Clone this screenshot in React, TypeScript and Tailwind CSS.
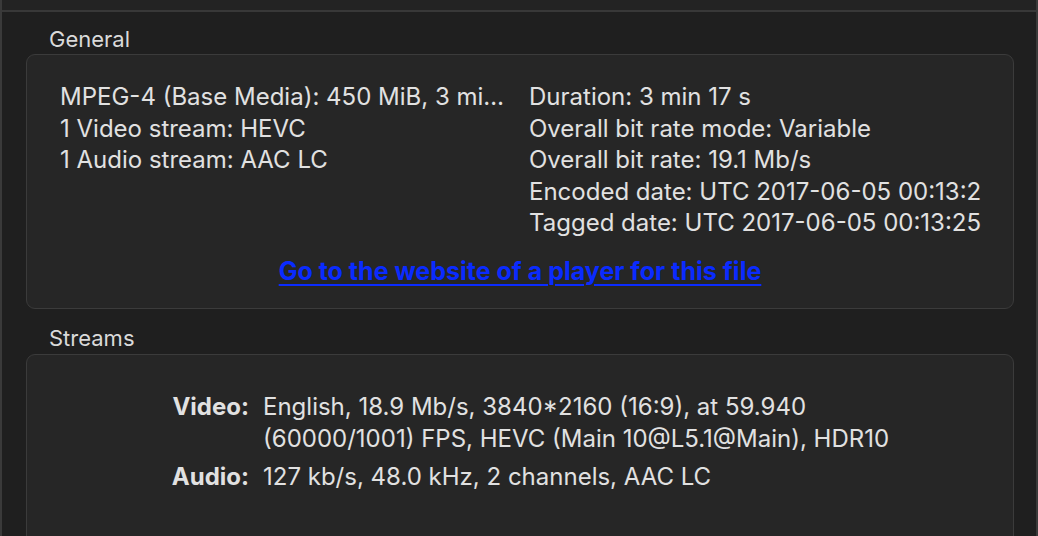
import React from "react";

const font = { fontFamily: "Inter, 'Noto Sans', sans-serif" };

function Section({ title, titleH, children, className = "" }: { title: string; titleH: string; children: React.ReactNode; className?: string }) {
  return (
    <div>
      <div className={`pl-[23px] flex items-end text-[22px] leading-[28px] text-[#dadada] ${titleH}`}>{title}</div>
      <div className={`rounded-[9px] border border-[#3b3b3b] bg-[#262626] ${className}`}>{children}</div>
    </div>
  );
}

export default function App() {
  const left = ["MPEG-4 (Base Media): 450 MiB, 3 min 17 s", "1 Video stream: HEVC", "1 Audio stream: AAC LC"];
  const right = [
    "Duration: 3 min 17 s",
    "Overall bit rate mode: Variable",
    "Overall bit rate: 19.1 Mb/s",
    "Encoded date: UTC 2017-06-05 00:13:25",
    "Tagged date: UTC 2017-06-05 00:13:25",
  ];

  return (
    <div style={font} className="h-[536px] overflow-hidden bg-[#1f1f1f] border-l-2 border-r-2 border-[#3a3a3a] text-[#e1e1e1]">
      <div className="h-[12px] bg-[#232323] border-b-2 border-[#383838]" />
      <div className="pl-[24px] pr-[22px]">
        <Section title="General" titleH="h-[42px] pb-[1px]" className="h-[255px] pt-[26px]">
          <div className="flex text-[24px] leading-[31.6px]">
            <div className="w-[502px] pl-[33px] pr-[20px]">
              {left.map((t) => (
                <div key={t} className="truncate">{t}</div>
              ))}
            </div>
            <div className="w-[452px] overflow-hidden">
              {right.map((t) => (
                <div key={t} className="whitespace-nowrap overflow-hidden">{t}</div>
              ))}
            </div>
          </div>
          <div className="text-center mt-[14px] leading-[36px]">
            <a href="#" className="text-[25px] font-bold text-[#0a2bff] underline underline-offset-[4px] decoration-2">
              Go to the website of a player for this file
            </a>
          </div>
        </Section>
        <Section title="Streams" titleH="h-[45px] pb-[2px]" className="h-[200px] pt-[36px]">
          <div className="grid grid-cols-[222px_1fr] gap-x-[14px] gap-y-[6px] text-[24px] leading-[32px]">
            <div className="text-right font-bold">Video:</div>
            <div>
              English, 18.9 Mb/s, 3840*2160 (16:9), at 59.940
              <br />
              (60000/1001) FPS, HEVC (Main 10@L5.1@Main), HDR10
            </div>
            <div className="text-right font-bold">Audio:</div>
            <div>127 kb/s, 48.0 kHz, 2 channels, AAC LC</div>
          </div>
        </Section>
      </div>
    </div>
  );
}
